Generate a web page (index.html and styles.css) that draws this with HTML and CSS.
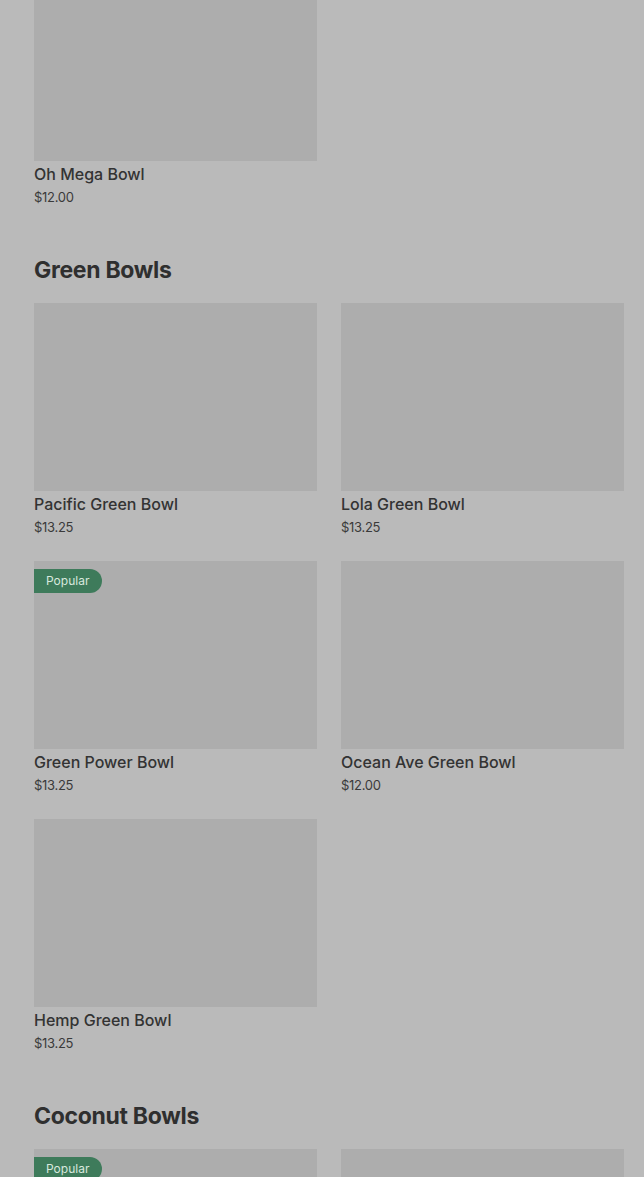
FILE: index.html
```html
<!DOCTYPE html>
<html lang="en">
<head>
<meta charset="utf-8">
<title>Menu</title>
<link rel="stylesheet" href="styles.css">
</head>
<body>
<main class="menu">
  <section class="section first">
    <div class="grid">
      <div class="card">
        <div class="thumb"></div>
        <div class="name">Oh Mega Bowl</div>
        <div class="price">$12.00</div>
      </div>
    </div>
  </section>

  <section class="section">
    <h2 class="heading">Green Bowls</h2>
    <div class="grid">
      <div class="card">
        <div class="thumb"></div>
        <div class="name">Pacific Green Bowl</div>
        <div class="price">$13.25</div>
      </div>
      <div class="card">
        <div class="thumb"></div>
        <div class="name">Lola Green Bowl</div>
        <div class="price">$13.25</div>
      </div>
      <div class="card">
        <div class="thumb"><span class="badge">Popular</span></div>
        <div class="name">Green Power Bowl</div>
        <div class="price">$13.25</div>
      </div>
      <div class="card">
        <div class="thumb"></div>
        <div class="name">Ocean Ave Green Bowl</div>
        <div class="price">$12.00</div>
      </div>
      <div class="card">
        <div class="thumb"></div>
        <div class="name">Hemp Green Bowl</div>
        <div class="price">$13.25</div>
      </div>
    </div>
  </section>

  <section class="section">
    <h2 class="heading">Coconut Bowls</h2>
    <div class="grid">
      <div class="card">
        <div class="thumb"><span class="badge">Popular</span></div>
      </div>
      <div class="card">
        <div class="thumb"></div>
      </div>
    </div>
  </section>
</main>
</body>
</html>
```

FILE: styles.css
```css
html, body {
  margin: 0;
  padding: 0;
  background: #bababa;
}
body {
  font-family: Inter, "Noto Sans", sans-serif;
  color: #303030;
  overflow: hidden;
}
.menu {
  padding: 0 20px 0 34px;
  margin-top: -27px;
}
.section {
  display: flex;
  flex-direction: column;
}
.heading {
  margin: 47px 0 17px;
  font-size: 23px;
  line-height: 32px;
  font-weight: 700;
  letter-spacing: -0.3px;
  color: #2f2f2f;
}
.grid {
  display: grid;
  grid-template-columns: 283px 283px;
  column-gap: 24px;
  row-gap: 24px;
}
.card {
  display: flex;
  flex-direction: column;
}
.thumb {
  position: relative;
  height: 188px;
  background: #adadad;
}
.name {
  margin-top: 1px;
  margin-bottom: 1px;
  font-size: 16px;
  line-height: 24px;
  font-weight: 500;
  color: #333333;
}
.price {
  font-size: 13px;
  line-height: 20px;
  letter-spacing: -0.3px;
  color: #3a3a3a;
}
.badge {
  position: absolute;
  top: 8px;
  left: 0;
  height: 24px;
  line-height: 24px;
  padding: 0 13px 0 12px;
  font-size: 12px;
  color: #d8e8de;
  background: #3e7b5b;
  border-radius: 0 12px 12px 0;
}
```
